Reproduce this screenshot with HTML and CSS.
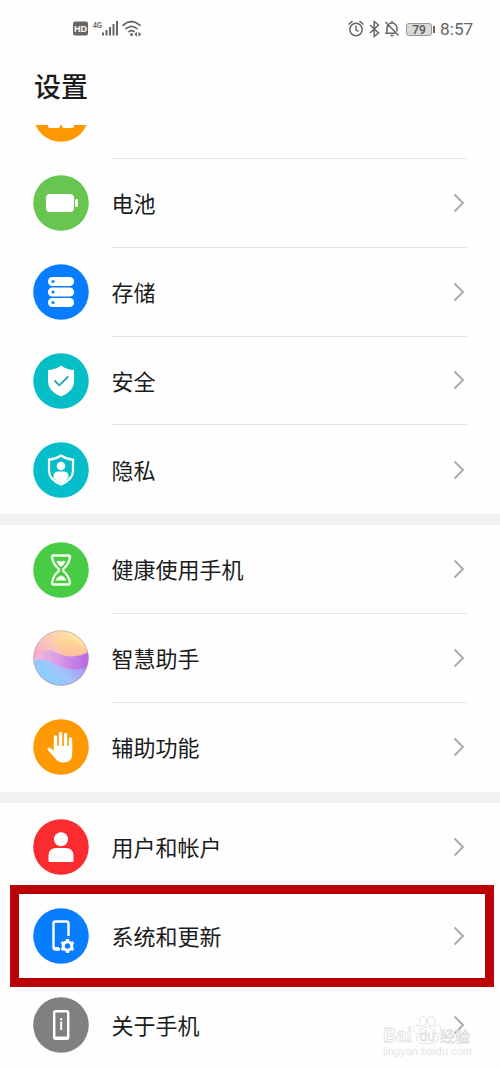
FILE: index.html
```html
<!DOCTYPE html>
<html lang="zh-CN">
<head>
<meta charset="utf-8">
<title>设置</title>
<link rel="stylesheet" href="styles.css">
</head>
<body>
<div class="phone">
  <header class="status">
    <svg class="status-left" viewBox="0 0 70 22" fill="none">
      <rect x="1" y="3.500" width="15" height="14" rx="2" fill="#666"/>
      <text class="hd" x="8.500" y="14" text-anchor="middle">HD</text>
      <text class="net" x="21" y="9.500" textLength="9" lengthAdjust="spacingAndGlyphs">4G</text>
      <path d="M31 14.500v3M34.500 12V17.500M38 9V17.500M41.500 6V17.500M45 3V17.500" stroke="#666" stroke-width="2"/>
      <path d="M51 7.300Q59.500-.1 68 7.300M54 10.700Q59.500 5.900 65 10.700M57 13.700Q59.500 11.700 62 13.700" stroke="#666" stroke-width="1.700" stroke-linecap="round"/>
      <circle cx="59.500" cy="16.500" r="1.500" fill="#666"/>
      <path d="M65 13.800v5L62.300 16.300zM66.500 13.800v5L69.200 16.300z" fill="#666"/>
    </svg>
    <div class="status-right">
      <svg class="status-icons" viewBox="0 0 54 20" fill="none" stroke="#666" stroke-width="1.500">
        <circle cx="9" cy="10.500" r="6.200"/><path d="M9 6.500v4.300l2.600 1.500M1.500 5.500 5.500 2.200M16.500 5.500 12.500 2.200"/>
        <path d="m23 6 8.500 8-4.300 3.500V2.500l4.300 3.500L23 14"/>
        <path d="M38.500 3 51.500 16.500M38 14.200h10M40 13.500V8.200l1-2M42 4.800c4.500-2 8 .6 8 4.200v3.500M43.500 16.500h3M45 2v2"/>
      </svg>
      <span class="battery">79</span><i class="battery-tip"></i>
      <span class="clock">8:57</span>
    </div>
  </header>
  <h1 class="title">设置</h1>
  <main>
    <div class="row-cut">
      <svg class="icon icon-cut" viewBox="0 0 56 56"><circle cx="28" cy="28" r="27.800" fill="#fe9901"/><rect x="15" y="15" width="12" height="27" rx="2" fill="#fff"/><rect x="29" y="15" width="12" height="27" rx="2" fill="#fff"/></svg>
      <div class="line"></div>
    </div>
    <section class="group">
      <div class="row">
        <svg class="icon" viewBox="0 0 56 56"><circle cx="28" cy="28" r="27.800" fill="#67c650"/><rect x="13" y="19" width="28" height="18" rx="4" fill="#fff"/><rect x="42" y="24" width="3" height="8" rx="1.300" fill="#fff"/></svg>
        <div class="cell"><span>电池</span><svg class="arrow" viewBox="0 0 12 20"><path d="m1.500 1.500 8.500 8.500-8.500 8.500"/></svg></div>
      </div>
      <div class="row">
        <svg class="icon" viewBox="0 0 56 56"><circle cx="28" cy="28" r="27.800" fill="#087dff"/><g fill="#fff"><rect x="15" y="13" width="26" height="9" rx="4.300"/><rect x="15" y="23.500" width="26" height="9" rx="4.300"/><rect x="15" y="34" width="26" height="9" rx="4.300"/></g><g fill="#087dff"><circle cx="20" cy="17.500" r="1.500"/><circle cx="20" cy="28" r="1.500"/><circle cx="20" cy="38.500" r="1.500"/></g></svg>
        <div class="cell"><span>存储</span><svg class="arrow" viewBox="0 0 12 20"><path d="m1.500 1.500 8.500 8.500-8.500 8.500"/></svg></div>
      </div>
      <div class="row">
        <svg class="icon" viewBox="0 0 56 56"><circle cx="28" cy="28" r="27.800" fill="#06bfc6"/><path d="M28 12.500q6 4.300 13 4.500v12q0 9-13 14.500Q15 38 15 29V17q7-.2 13-4.500z" fill="#fff"/><path d="m21.500 27.500 4.800 4.800 9-9" fill="none" stroke="#18a6ab" stroke-width="1.800"/></svg>
        <div class="cell"><span>安全</span><svg class="arrow" viewBox="0 0 12 20"><path d="m1.500 1.500 8.500 8.500-8.500 8.500"/></svg></div>
      </div>
      <div class="row last">
        <svg class="icon" viewBox="0 0 56 56"><circle cx="28" cy="28" r="27.800" fill="#06bec9"/><path d="M28 13.500q5.500 3.800 12 4.200V29q0 8.500-12 13.500Q16 37.500 16 29V17.700q6.500-.4 12-4.200z" fill="none" stroke="#fff" stroke-width="2.200"/><circle cx="28" cy="24" r="4.300" fill="#fff"/><path d="M20.500 35.500V34q0-4.500 5-4.500h5q5 0 5 4.500v1.500Q33 39.500 28 41.500q-5-2-7.500-6z" fill="#fff"/></svg>
        <div class="cell"><span>隐私</span><svg class="arrow" viewBox="0 0 12 20"><path d="m1.500 1.500 8.500 8.500-8.500 8.500"/></svg></div>
      </div>
    </section>
    <section class="group">
      <div class="row">
        <svg class="icon" viewBox="0 0 56 56"><circle cx="28" cy="28" r="27.800" fill="#48cc45"/><path d="M20.200 13.500h15.600q1.500 0 1.100 2-1 6.700-6.600 11.500v2q5.600 4.800 6.600 11.500.4 2-1.100 2H20.200q-1.500 0-1.100-2 1-6.700 6.600-11.500v-2q-5.600-4.800-6.600-11.500-.4-2 1.100-2z" fill="none" stroke="#f4fff0" stroke-width="2.300"/><path d="M23.500 19.500q2.500-1.500 4.500.3 2-1.800 4.500-.3-1.500 3.500-4.500 5.500-3-2-4.500-5.500zM22.500 38.500q2-4.200 5.500-5 3.500.8 5.500 5z" fill="#f4fff0"/></svg>
        <div class="cell"><span>健康使用手机</span><svg class="arrow" viewBox="0 0 12 20"><path d="m1.500 1.500 8.500 8.500-8.500 8.500"/></svg></div>
      </div>
      <div class="row">
        <svg class="icon" viewBox="0 0 56 56">
          <defs>
            <linearGradient id="sky" x1=".1" y1=".6" x2=".6" y2="0"><stop offset="0" stop-color="#f3a3c4"/><stop offset=".5" stop-color="#fbc4bd"/><stop offset="1" stop-color="#fde3a0"/></linearGradient>
            <linearGradient id="peach" x1=".6" y1="0" x2=".4" y2="1"><stop offset="0" stop-color="#ffdf92"/><stop offset="1" stop-color="#fab7a4"/></linearGradient>
            <linearGradient id="hill" x1="0" x2="1"><stop offset="0" stop-color="#f3bfdc"/><stop offset=".45" stop-color="#d79be6"/><stop offset="1" stop-color="#b566e2"/></linearGradient>
            <linearGradient id="sea" x1=".1" y1=".6" x2="1" y2=".2"><stop offset="0" stop-color="#84d2fc"/><stop offset=".45" stop-color="#a3c3fb"/><stop offset="1" stop-color="#a98bf3"/></linearGradient>
            <clipPath id="orb"><circle cx="28" cy="28" r="27.500"/></clipPath>
          </defs>
          <g clip-path="url(#orb)"><path fill="url(#sky)" d="M0 0h56v56H0z"/><path fill="url(#peach)" d="M20 10q12-6 22 1 8 6 14 9v10H30q-4-14-10-20z"/><path fill="url(#hill)" d="M0 30Q9 18 20 21q10 6 20 5.500 9-1 16-4.500v34H0z"/><path fill="url(#sea)" d="M0 31q9-3 18 1 11 7 22 7.500 10 0 16-3.500v20H0z"/></g>
          <circle cx="28" cy="28" r="27.300" fill="none" stroke="#bf8cb0" stroke-opacity=".6"/>
        </svg>
        <div class="cell"><span>智慧助手</span><svg class="arrow" viewBox="0 0 12 20"><path d="m1.500 1.500 8.500 8.500-8.500 8.500"/></svg></div>
      </div>
      <div class="row last">
        <svg class="icon" viewBox="0 0 56 56"><circle cx="28" cy="28" r="27.800" fill="#fe9901"/><path d="M22.500 34V18M27.500 29V14.500M32.500 29V15.500M37.500 32V20" stroke="#fff" stroke-width="3.400" stroke-linecap="round"/><path d="M20.800 27h18.400v8q0 8.500-8.500 8.500-6.200 0-9.200-5l-7-8q-.8-1.500 1-2 2-.3 5.300 3.500z" fill="#fff"/></svg>
        <div class="cell"><span>辅助功能</span><svg class="arrow" viewBox="0 0 12 20"><path d="m1.500 1.500 8.500 8.500-8.500 8.500"/></svg></div>
      </div>
    </section>
    <section class="group">
      <div class="row last">
        <svg class="icon" viewBox="0 0 56 56"><circle cx="28" cy="28" r="27.800" fill="#fb2c2f"/><circle cx="28" cy="20.300" r="7" fill="#fff"/><path d="M15.500 41.500v-5q0-7.500 8-7.500h9q8 0 8 7.500v5q0 1.500-1.500 1.500H17q-1.500 0-1.500-1.500z" fill="#fff"/></svg>
        <div class="cell"><span>用户和帐户</span><svg class="arrow" viewBox="0 0 12 20"><path d="m1.500 1.500 8.500 8.500-8.500 8.500"/></svg></div>
      </div>
      <div class="row last marked">
        <svg class="icon" viewBox="0 0 56 56"><circle cx="28" cy="28" r="27.800" fill="#087dff"/><path d="M27 41.300h-4.500q-2 0-2-2V15.500q0-2 2-2h11q2 0 2 2V28" fill="none" stroke="#fff" stroke-width="2.400"/><path d="M20 39h6v3.500h-4q-2 0-2-2z" fill="#fff"/><circle cx="34.500" cy="38" r="7.500" fill="#087dff"/><circle cx="34.500" cy="38" r="4.200" fill="none" stroke="#fff" stroke-width="3"/><path d="M34.500 31v2.500M34.500 42.500V45M28.400 34.500l2.200 1.200M38.400 40.300l2.200 1.200M28.400 41.500l2.200-1.200M38.400 35.700l2.200-1.200" stroke="#fff" stroke-width="3.200"/></svg>
        <div class="cell"><span>系统和更新</span><svg class="arrow" viewBox="0 0 12 20"><path d="m1.500 1.500 8.500 8.500-8.500 8.500"/></svg></div>
      </div>
      <div class="row last">
        <svg class="icon" viewBox="0 0 56 56"><circle cx="28" cy="28" r="27.800" fill="#808080"/><rect x="21.200" y="14.200" width="14" height="27.500" rx="1.500" fill="none" stroke="#fff" stroke-width="2.500"/><path d="M21 39.500h14.500v3H21z" fill="#fff"/><path d="M28.200 21v2.200M28.200 24.500v8.500" stroke="#fff" stroke-width="2"/></svg>
        <div class="cell"><span>关于手机</span><svg class="arrow" viewBox="0 0 12 20"><path d="m1.500 1.500 8.500 8.500-8.500 8.500"/></svg></div>
      </div>
    </section>
  </main>
  <svg class="watermark" viewBox="0 0 96 50">
    <g fill="#fff" fill-opacity=".6" stroke="#e4e4e4">
      <ellipse cx="36" cy="15.500" rx="3.300" ry="4.300"/><ellipse cx="42" cy="7" rx="3.500" ry="4.600"/><ellipse cx="50.500" cy="7" rx="3.500" ry="4.600"/><ellipse cx="56.500" cy="15.500" rx="3.300" ry="4.300"/><path d="M46 12.500q4 0 7 5.500 5 4 4 8-1.500 4-11 3.500Q37 30 35.500 26q-1-4 4-8 3-5.500 6.500-5.500z"/>
    </g>
    <text class="wm-big" x="2" y="28" textLength="29" lengthAdjust="spacingAndGlyphs">Bai</text><text class="wm-du" x="38.500" y="27">du</text><text class="wm-cn" x="59" y="28" textLength="30">经验</text>
    <text class="wm-url" x="2" y="41" textLength="89">jingyan.baidu.com</text>
  </svg>
</div>
</body>
</html>
```
FILE: styles.css
```css
* { box-sizing: border-box; }
body { margin: 0; background: #fefefe; color: #1b1b1b; font-family: "Noto Sans CJK SC", sans-serif; }
.phone { position: relative; width: 500px; height: 1069px; overflow: hidden; }
.status { height: 58px; display: flex; justify-content: space-between; padding: 18px 27px 0 72px; }
.status-left { width: 70px; height: 22px; }
.status-left .hd { font: bold 9px "Liberation Sans", sans-serif; fill: #fff; }
.status-left .net { font: bold 8.5px "Liberation Sans", sans-serif; fill: #666; }
.status-right { display: flex; align-items: center; height: 22px; }
.status-icons { width: 54px; height: 20px; margin-right: 5px; }
.battery { width: 26px; height: 13px; border: 1px solid #999; border-radius: 3px; background: #d9d9d9; color: #555; font: 500 12px/12px Roboto, sans-serif; text-align: center; }
.battery-tip { width: 2px; height: 7px; margin-left: 1px; background: #666; }
.clock { margin-left: 5px; font: 17.3px/22px Roboto, sans-serif; color: #666; width: 33px; white-space: nowrap; }
.title { margin: 0; height: 67px; padding-left: 34px; font-size: 27px; line-height: 55px; font-weight: 500; }
.row-cut { height: 34px; overflow: hidden; padding-left: 33px; display: flex; }
.icon { width: 56px; height: 56px; flex: none; }
.icon-cut { margin-top: -39px; }
.line { flex: 1; margin: 0 33px 0 22px; border-bottom: 1px solid #e3e3e3; }
.group + .group { border-top: 11px solid #f2f2f2; }
.row { height: 88.8px; padding: 0 33px; display: flex; align-items: center; gap: 22px; }
.cell { flex: 1; height: 100%; display: flex; align-items: center; justify-content: space-between; padding: 0 2px 0 .6px; border-bottom: 1px solid #e3e3e3; font-size: 22px; line-height: 32px; }
.cell span { padding-bottom: 1.4px; }
.last .cell { border-bottom: 0; }
.arrow { width: 12px; height: 20px; fill: none; stroke: #acacac; stroke-width: 2; }
.marked { height: 102px; margin: -6.6px 6px -6.6px 10px; padding: 0 18px 0 14px; border: 9px solid #ba0005; }
.watermark { position: absolute; left: 381px; top: 1014px; width: 96px; height: 50px; font-family: "Liberation Sans", "Noto Sans CJK SC", sans-serif; }
.watermark text { fill: #fff; stroke: #dedede; stroke-width: .8px; }
.watermark .wm-big { font-size: 20px; font-weight: bold; }
.watermark .wm-du { font-size: 14px; }
.watermark .wm-cn { font-size: 15px; }
.watermark .wm-url { font-size: 11px; fill: #e4e4e4; stroke: none; }
```
